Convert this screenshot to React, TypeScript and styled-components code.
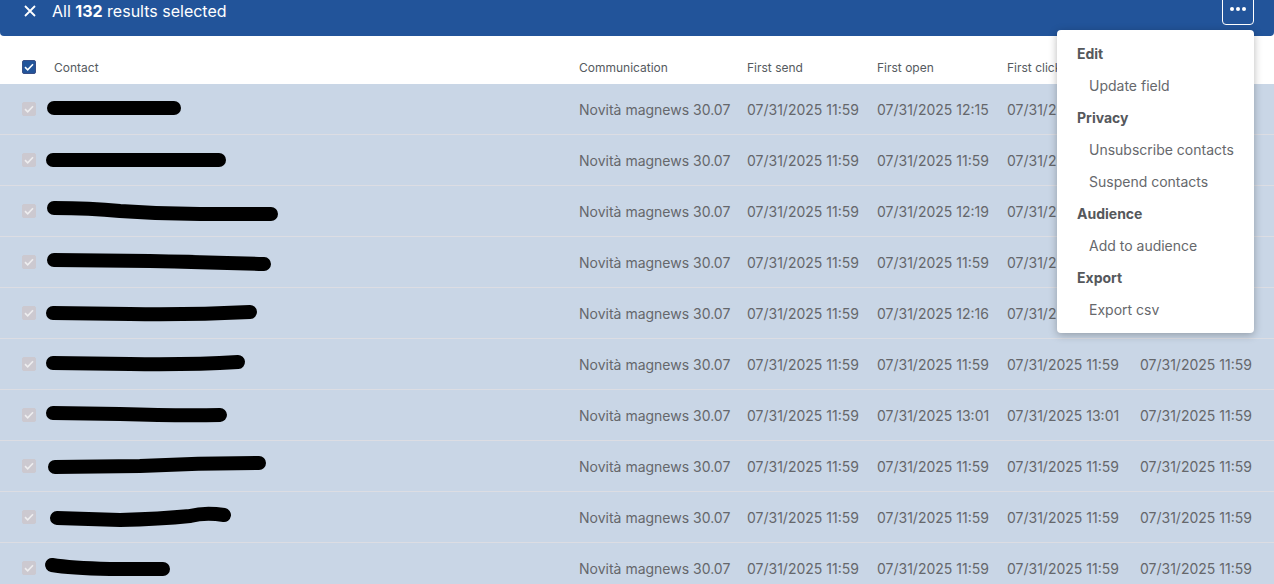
import React from 'react';
import styled, { createGlobalStyle } from 'styled-components';

const GlobalStyle = createGlobalStyle`
  html, body {
    margin: 0;
    padding: 0;
    background: #ffffff;
    font-family: Inter, "Noto Sans", sans-serif;
    overflow: hidden;
  }
`;

const Page = styled.div`
  position: relative;
  width: 1274px;
  height: 584px;
  overflow: hidden;
`;

const SelectionBar = styled.div`
  height: 36px;
  background: #22549a;
  border-radius: 0 0 4px 4px;
  display: flex;
  align-items: flex-start;
  padding: 0 20px 0 22px;
  box-sizing: border-box;
  color: #ffffff;
`;

const CloseButton = styled.button`
  width: 16px;
  height: 22px;
  padding: 0;
  border: none;
  background: none;
  color: #ffffff;
  display: flex;
  align-items: center;
  justify-content: center;
  margin-right: 14px;
  cursor: pointer;
`;

const Title = styled.div`
  font-size: 16px;
  line-height: 22px;
  flex: 1;

  b {
    font-weight: 700;
  }
`;

const MoreButton = styled.button`
  width: 32px;
  height: 32px;
  margin-top: -7px;
  border: 1px solid #ffffff;
  border-radius: 4px;
  background: transparent;
  display: flex;
  align-items: center;
  justify-content: center;
  gap: 2px;
  padding: 0;
  cursor: pointer;
`;

const Dot = styled.span`
  width: 4px;
  height: 4px;
  border-radius: 50%;
  background: #ffffff;
`;

const Table = styled.div`
  margin-top: 14px;
`;

const Grid = styled.div<{ $body?: boolean }>`
  display: grid;
  grid-template-columns: 54px 525px 168px 130px 130px 133px 1fr;
  align-items: center;
  height: ${(p) => (p.$body ? '50px' : '34px')};
  background: ${(p) => (p.$body ? '#c9d6e6' : '#ffffff')};
  border-bottom: ${(p) => (p.$body ? '1px solid #dcdde3' : 'none')};
`;

const HeadCell = styled.div`
  font-size: 12px;
  color: #555a60;
  white-space: nowrap;
  overflow: hidden;
`;

const Cell = styled.div`
  font-size: 14px;
  color: #65676b;
  white-space: nowrap;
  overflow: hidden;
`;

const RedactedCell = styled.div`
  margin-left: -54px;
  overflow: hidden;
`;

const CheckCell = styled.div`
  padding-left: 22px;
  display: flex;
  align-items: center;
`;

const Check = styled.span<{ $disabled?: boolean }>`
  width: 14px;
  height: 14px;
  border-radius: 2px;
  box-sizing: border-box;
  background: ${(p) => (p.$disabled ? '#ccc9d0' : '#22549a')};
  border: 1px solid ${(p) => (p.$disabled ? '#ccc9d0' : '#3a4f86')};
  display: flex;
  align-items: center;
  justify-content: center;
`;

const Scribble = styled.svg`
  display: block;
  width: 300px;
  height: 30px;
`;

const Menu = styled.div`
  position: absolute;
  left: 1057px;
  top: 30px;
  width: 197px;
  padding: 8px 0 7px;
  background: #ffffff;
  border-radius: 4px;
  box-shadow: 0 2px 8px rgba(0, 0, 0, 0.28);
  box-sizing: border-box;
`;

const MenuGroup = styled.div`
  font-size: 14px;
  font-weight: 700;
  color: #55585c;
  line-height: 32px;
  padding-left: 20px;
`;

const MenuItem = styled.div`
  font-size: 14px;
  color: #66686c;
  line-height: 32px;
  padding-left: 32px;
  cursor: pointer;
`;

const CheckMark = ({ color }: { color: string }) => (
  <svg width="10" height="8" viewBox="0 0 10 8">
    <path d="M1 4.2 L3.7 6.8 L9 1.2" fill="none" stroke={color} strokeWidth="1.6" />
  </svg>
);

// redaction marks over the contact addresses
const scribbles = [
  'M54 14 L174 14',
  'M53 15 L219 15',
  'M54 12 Q90 12 120 15 Q160 18 200 18 L271 18',
  'M54 13 L150 14 Q200 15 264 17',
  'M53 15 L130 16 Q190 17 250 14',
  'M53 14 L130 15 Q190 16 238 13',
  'M53 13 L120 14 Q180 16 220 15',
  'M55 16 L140 15 Q200 12 259 12',
  'M57 16 L120 18 Q160 17 190 14 Q205 10 224 13',
  'M52 12 Q70 15 110 16 L163 16',
];

const rows = [
  ['07/31/2025 12:15', '07/31/2025', '07/31/2025 11:59'],
  ['07/31/2025 11:59', '07/31/2025', '07/31/2025 11:59'],
  ['07/31/2025 12:19', '07/31/2025', '07/31/2025 11:59'],
  ['07/31/2025 11:59', '07/31/2025', '07/31/2025 11:59'],
  ['07/31/2025 12:16', '07/31/2025', '07/31/2025 11:59'],
  ['07/31/2025 11:59', '07/31/2025 11:59', '07/31/2025 11:59'],
  ['07/31/2025 13:01', '07/31/2025 13:01', '07/31/2025 11:59'],
  ['07/31/2025 11:59', '07/31/2025 11:59', '07/31/2025 11:59'],
  ['07/31/2025 11:59', '07/31/2025 11:59', '07/31/2025 11:59'],
  ['07/31/2025 11:59', '07/31/2025 11:59', '07/31/2025 11:59'],
];

const App: React.FC = () => {
  return (
    <Page>
      <GlobalStyle />
      <SelectionBar>
        <CloseButton aria-label="Close">
          <svg width="12" height="12" viewBox="0 0 12 12">
            <path d="M1 1 L11 11 M11 1 L1 11" stroke="#ffffff" strokeWidth="1.8" />
          </svg>
        </CloseButton>
        <Title>
          All <b>132</b> results selected
        </Title>
        <MoreButton aria-label="More actions">
          <Dot />
          <Dot />
          <Dot />
        </MoreButton>
      </SelectionBar>

      <Table>
        <Grid>
          <CheckCell>
            <Check>
              <CheckMark color="#ffffff" />
            </Check>
          </CheckCell>
          <HeadCell>Contact</HeadCell>
          <HeadCell>Communication</HeadCell>
          <HeadCell>First send</HeadCell>
          <HeadCell>First open</HeadCell>
          <HeadCell>First click</HeadCell>
          <HeadCell>Last click</HeadCell>
        </Grid>
        {rows.map((r, i) => (
          <Grid $body key={i}>
            <CheckCell>
              <Check $disabled>
                <CheckMark color="#eeeef0" />
              </Check>
            </CheckCell>
            <RedactedCell>
              <Scribble viewBox="0 0 300 30">
                <path d={scribbles[i]} fill="none" stroke="#000" strokeWidth="14" strokeLinecap="round" />
              </Scribble>
            </RedactedCell>
            <Cell>Novità magnews 30.07</Cell>
            <Cell>07/31/2025 11:59</Cell>
            <Cell>{r[0]}</Cell>
            <Cell>{r[1]}</Cell>
            <Cell>{r[2]}</Cell>
          </Grid>
        ))}
      </Table>

      <Menu>
        <MenuGroup>Edit</MenuGroup>
        <MenuItem>Update field</MenuItem>
        <MenuGroup>Privacy</MenuGroup>
        <MenuItem>Unsubscribe contacts</MenuItem>
        <MenuItem>Suspend contacts</MenuItem>
        <MenuGroup>Audience</MenuGroup>
        <MenuItem>Add to audience</MenuItem>
        <MenuGroup>Export</MenuGroup>
        <MenuItem>Export csv</MenuItem>
      </Menu>
    </Page>
  );
};

export default App;
